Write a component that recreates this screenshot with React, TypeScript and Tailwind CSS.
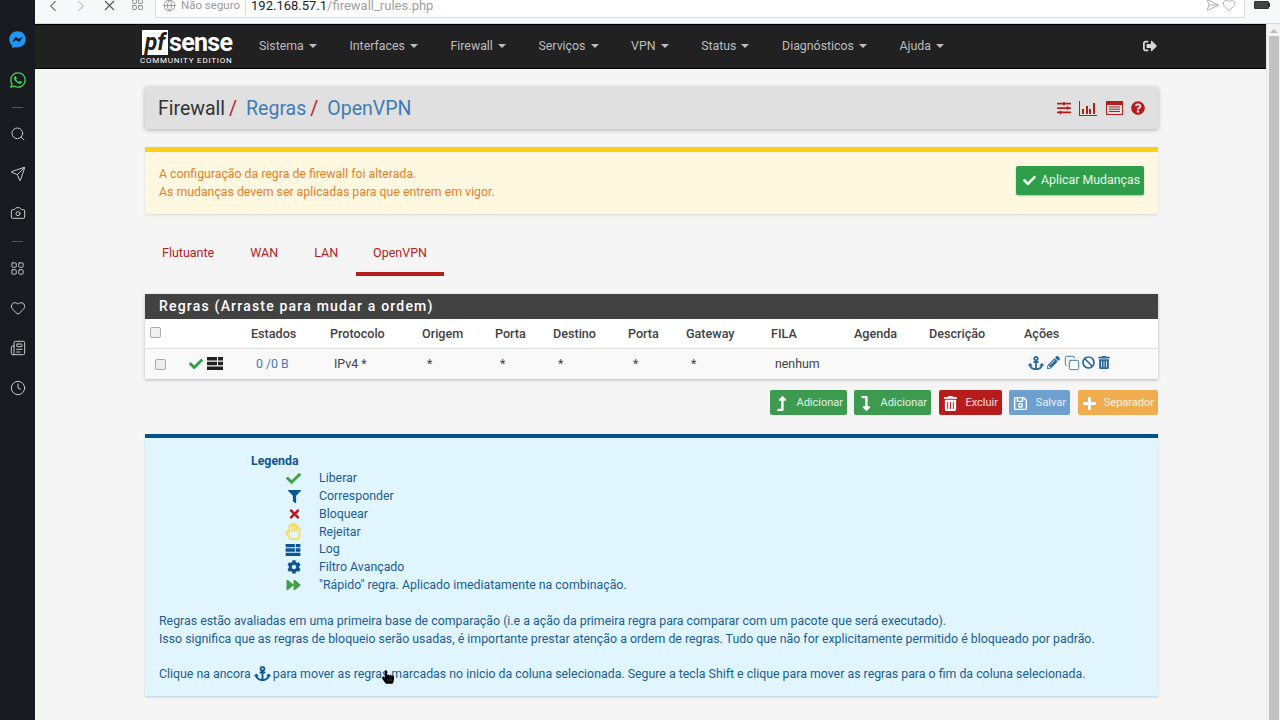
import { ChevronLeft, ChevronRight, X, LayoutGrid, Globe, Send, Heart, Search, Camera, Newspaper, Clock, Copy } from "lucide-react";
import {
  FaFacebookMessenger,
  FaWhatsapp,
  FaSignOutAlt,
  FaSlidersH,
  FaQuestionCircle,
  FaCheck,
  FaFilter,
  FaTimes,
  FaRegHandPaper,
  FaCog,
  FaForward,
  FaAnchor,
  FaPencilAlt,
  FaBan,
  FaTrashAlt,
  FaLevelUpAlt,
  FaLevelDownAlt,
  FaRegSave,
  FaPlus,
  FaHandPointer,
} from "react-icons/fa";

const menu = ["Sistema", "Interfaces", "Firewall", "Serviços", "VPN", "Status", "Diagnósticos", "Ajuda"];

function LogIcon({ className }: { className: string }) {
  return (
    <svg viewBox="0 0 16 13" className={className} fill="currentColor">
      <path d="M0 0h10v3.6H0zM11 0h5v3.6h-5zM0 4.7h10v3.6H0zM11 4.7h5v3.6h-5zM0 9.4h16V13H0z" />
    </svg>
  );
}

function BarsIcon() {
  return (
    <svg viewBox="0 0 18 15" className="h-[15px] w-[18px] text-[#b71c1c]" fill="currentColor">
      <path d="M0 0h1v14h17v1H0zM3 8h2v5H3zM7 5h2v8H7zM10 8h2v5h-2zM14 2h2v11h-2z" />
    </svg>
  );
}

function ListBoxIcon() {
  return (
    <svg viewBox="0 0 17 14" className="h-[14px] w-[17px] text-[#b71c1c]" fill="currentColor">
      <path d="M0 0h17v14H0zM1 4v9h15V4z" fillRule="evenodd" />
      <path d="M3 5.5h11v1H3zM3 7.8h11v1H3zM3 10.1h11v1H3z" />
    </svg>
  );
}

function Caret() {
  return <span className="ml-[5px] inline-block border-x-[4px] border-t-[4px] border-x-transparent border-t-[#bdbdbd] align-middle" />;
}

function Sidebar() {
  return (
    <aside className="flex w-[35px] shrink-0 flex-col items-center bg-[#171b1f] pt-[31px] text-[#c8c9ca]">
      <FaFacebookMessenger className="h-[17px] w-[17px] text-[#2196f3]" />
      <FaWhatsapp className="mt-[23px] h-[18px] w-[18px] text-[#43d854]" />
      <div className="mt-[18px] h-px w-[11px] bg-[#555]" />
      <Search className="mt-[18px] h-[16px] w-[16px]" strokeWidth={1.5} />
      <Send className="mt-[24px] h-[16px] w-[16px]" strokeWidth={1.5} />
      <Camera className="mt-[23px] h-[16px] w-[16px]" strokeWidth={1.5} />
      <div className="mt-[20px] h-px w-[11px] bg-[#555]" />
      <LayoutGrid className="mt-[19px] h-[15px] w-[15px]" strokeWidth={1.5} />
      <Heart className="mt-[24px] h-[16px] w-[16px]" strokeWidth={1.5} />
      <Newspaper className="mt-[24px] h-[16px] w-[16px]" strokeWidth={1.5} />
      <Clock className="mt-[24px] h-[16px] w-[16px]" strokeWidth={1.5} />
    </aside>
  );
}

function BrowserBar() {
  return (
    <div className="flex h-[24px] shrink-0 items-start border-b border-[#dcdcdc] bg-[#f7f8f9] text-[#777]">
      <ChevronLeft className="ml-[9px] mt-[-3px] h-[18px] w-[18px]" strokeWidth={1.5} />
      <ChevronRight className="ml-[10px] mt-[-3px] h-[18px] w-[18px] text-[#c4c4c4]" strokeWidth={1.5} />
      <X className="ml-[11px] mt-[-3px] h-[17px] w-[17px] text-[#555]" strokeWidth={1.5} />
      <LayoutGrid className="ml-[13px] mt-[-2px] h-[13px] w-[13px]" strokeWidth={1.5} />
      <div className="ml-[11px] flex h-[18px] w-[1090px] items-center border-r border-b border-l border-[#dcdcdc] bg-white pl-[7px]">
        <Globe className="mt-[-6px] h-[13px] w-[13px] text-[#888]" strokeWidth={1.5} />
        <span className="ml-[5px] mt-[-6px] text-[11.5px] text-[#9a9a9a]">Não seguro</span>
        <span className="ml-[5px] mt-[-6px] border-l border-[#ddd] pl-[5px] text-[13px] text-[#222]">
          192.168.57.1<span className="text-[#a0a0a0]">/firewall_rules.php</span>
        </span>
        <Send className="ml-auto mt-[-7px] h-[14px] w-[14px] rotate-45 text-[#aaa]" strokeWidth={1.5} />
        <Heart className="ml-[5px] mr-[8px] mt-[-7px] h-[14px] w-[14px] text-[#aaa]" strokeWidth={1.5} />
      </div>
      <div className="ml-[9px] mt-[1px] flex h-[8px] w-[15px] items-center rounded-[1px] border border-[#333] bg-[#444]" />
      <div className="mt-[3px] h-[4px] w-[1px] bg-[#333]" />
    </div>
  );
}

function Navbar() {
  return (
    <nav className="flex h-[45px] shrink-0 items-center border-y border-black bg-[#212121] pl-[107px] text-[#bdbdbd]">
      <div className="flex w-[117px] shrink-0 flex-col items-start self-start pt-[4px]">
        <div className="flex h-[26px] items-center">
          <span className="flex h-[25px] w-[26px] items-center justify-center bg-white text-[23px] font-bold italic leading-none text-[#212121]">pf</span>
          <span className="ml-[1px] text-[25px] font-bold leading-none tracking-[-0.7px] text-white">sense</span>
        </div>
        <span className="ml-[-2px] text-[8px] leading-[11px] tracking-[0.78px] text-white">COMMUNITY EDITION</span>
      </div>
      <div className="mb-[1px] flex gap-[32.6px]">
        {menu.map((item) => (
          <span key={item} className="text-[12.35px]">
            {item}
            <Caret />
          </span>
        ))}
      </div>
      <FaSignOutAlt className="mb-[2px] ml-auto mr-[109px] h-[14px] w-[14px] text-[#d8d8d8]" />
    </nav>
  );
}

function PageTitle() {
  return (
    <div className="flex h-[42px] items-center rounded-[2px] bg-[#e0e0e0] pl-[13px] pr-[13px] text-[19.5px] shadow-[0_1px_4px_rgba(0,0,0,0.3)]">
      <span className="pt-[1px] text-[#333]">Firewall</span>
      <span className="ml-[4px] pt-[1px] text-[#b71c1c]">/</span>
      <span className="ml-[9px] pt-[1px] text-[#3f7cb5]">Regras</span>
      <span className="ml-[4px] pt-[1px] text-[#b71c1c]">/</span>
      <span className="ml-[9px] pt-[1px] text-[#3f7cb5]">OpenVPN</span>
      <div className="ml-auto flex items-center text-[#b71c1c]">
        <FaSlidersH className="h-[14px] w-[14px]" />
        <span className="ml-[8px]"><BarsIcon /></span>
        <span className="ml-[9px]"><ListBoxIcon /></span>
        <FaQuestionCircle className="ml-[8px] h-[14px] w-[14px]" />
      </div>
    </div>
  );
}

function Alert() {
  return (
    <div className="mt-[18px] flex h-[67px] items-center justify-between border-t-[5px] border-[#fdd017] bg-[#fff8e1] pl-[14px] pr-[14px] shadow-[0_1px_2px_rgba(0,0,0,0.12)]">
      <div className="text-[12.3px] leading-[18px] text-[#ea7f1f]">
        <p>A configuração da regra de firewall foi alterada.</p>
        <p>As mudanças devem ser aplicadas para que entrem em vigor.</p>
      </div>
      <button type="button" className="mb-[6px] flex h-[29px] w-[128px] items-center justify-between rounded-[2px] bg-[#2e9e4a] pl-[7px] pr-[4px] text-[12.35px] text-white/90 shadow-[0_1px_2px_rgba(0,0,0,0.25)]">
        <FaCheck className="h-[13px] w-[13px]" />
        Aplicar Mudanças
      </button>
    </div>
  );
}

function Tabs() {
  return (
    <div className="mt-[20px] flex h-[42px] text-[12.5px] text-[#b71c1c]">
      <span className="flex items-center pb-[3px] pl-[17px] pr-[18px]">Flutuante</span>
      <span className="flex items-center px-[18px] pb-[3px]">WAN</span>
      <span className="flex items-center px-[18px] pb-[3px]">LAN</span>
      <span className="flex items-center border-b-[4px] border-[#b71c1c] px-[17px] pt-[1px]">OpenVPN</span>
    </div>
  );
}

const gridCols = "grid grid-cols-[106px_79px_92px_73px_58px_75px_58px_85px_83px_75px_95px_1fr]";

function RulesPanel() {
  return (
    <div className="mt-[18px] shadow-[0_1px_3px_rgba(0,0,0,0.25)]">
      <div className="flex h-[25px] items-center bg-[#424242] pl-[14px] text-[14px] font-medium tracking-[1.2px] text-white">
        Regras (Arraste para mudar a ordem)
      </div>
      <div className={`${gridCols} h-[30px] items-center border-b border-[#ddd] bg-white pt-[2px] text-[12.6px] font-medium text-[#424242]`}>
        <span className="pl-[5px]">
          <span className="mb-[4px] block h-[11px] w-[11px] rounded-[2px] border border-[#aaa] bg-[#f0f0f0]" />
        </span>
        <span>Estados</span>
        <span>Protocolo</span>
        <span>Origem</span>
        <span>Porta</span>
        <span>Destino</span>
        <span>Porta</span>
        <span>Gateway</span>
        <span>FILA</span>
        <span>Agenda</span>
        <span>Descrição</span>
        <span>Ações</span>
      </div>
      <div className={`${gridCols} h-[30px] items-center bg-[#f9f9f9] text-[12.35px] text-[#424242]`}>
        <span className="flex items-center pl-[10px]">
          <span className="block h-[11px] w-[11px] rounded-[2px] border border-[#aaa] bg-[#eee]" />
          <FaCheck className="ml-[23px] h-[14px] w-[14px] text-[#2e9e4a]" />
          <LogIcon className="ml-[4px] mb-[2px] h-[13px] w-[16px] text-[#212121]" />
        </span>
        <span className="pl-[5px] text-[#3f7cb5]">0 /0 B</span>
        <span className="pl-[4px]">IPv4 *</span>
        <span className="pl-[5px]">*</span>
        <span className="pl-[5px]">*</span>
        <span className="pl-[5px]">*</span>
        <span className="pl-[5px]">*</span>
        <span className="pl-[5px]">*</span>
        <span className="pl-[4px]">nenhum</span>
        <span />
        <span />
        <span className="flex items-center pl-[4px] pb-[3px] text-[#27689f]">
          <FaAnchor className="h-[16px] w-[16px]" />
          <FaPencilAlt className="ml-[3px] h-[13px] w-[13px]" />
          <Copy className="ml-[4px] h-[16px] w-[16px]" strokeWidth={1.25} />
          <FaBan className="ml-[2px] h-[13px] w-[13px]" />
          <FaTrashAlt className="ml-[3px] h-[13px] w-[12px]" />
        </span>
      </div>
    </div>
  );
}

const actions = [
  { label: "Adicionar", color: "bg-[#3c9b4e] w-[77px]", Icon: FaLevelUpAlt },
  { label: "Adicionar", color: "bg-[#3c9b4e] w-[77px] ml-[7px]", Icon: FaLevelDownAlt },
  { label: "Excluir", color: "bg-[#b71c1c] w-[63px] ml-[8px]", Icon: FaTrashAlt },
  { label: "Salvar", color: "bg-[#6d9fcf] w-[61px] ml-[7px]", Icon: FaRegSave },
  { label: "Separador", color: "bg-[#f0ad4e] w-[80px] ml-[8px]", Icon: FaPlus },
];

function ActionButtons() {
  return (
    <div className="mt-[11px] flex justify-end">
      {actions.map(({ label, color, Icon }, i) => (
        <button key={i} type="button" className={`flex h-[25px] items-center justify-between rounded-[2px] pl-[4px] pr-[4px] pt-[1px] text-[11px] text-white/85 ${color}`}>
          <Icon className="h-[15px] w-[15px] text-white" />
          {label}
        </button>
      ))}
    </div>
  );
}

const legend = [
  { text: "Liberar", icon: <FaCheck className="h-[15px] w-[15px] text-[#43a047]" /> },
  { text: "Corresponder", icon: <FaFilter className="h-[13px] w-[13px] text-[#0d5694]" /> },
  { text: "Bloquear", icon: <FaTimes className="h-[14px] w-[13px] text-[#b71c1c]" /> },
  { text: "Rejeitar", icon: <FaRegHandPaper className="h-[17px] w-[16px] text-[#fdd835]" /> },
  { text: "Log", icon: <LogIcon className="h-[12px] w-[16px] text-[#0d5694]" /> },
  { text: "Filtro Avançado", icon: <FaCog className="h-[14px] w-[14px] text-[#0d5694]" /> },
  { text: "\"Rápido\" regra. Aplicado imediatamente na combinação.", icon: <FaForward className="h-[14px] w-[15px] text-[#43a047]" /> },
];

function Legend() {
  return (
    <div className="relative mt-[19px] h-[262px] border-t-[4px] border-[#004f8f] bg-[#e1f5fe] pl-[14px] pt-[15px] text-[12.35px] text-[#1b5e92] shadow-[0_1px_2px_rgba(0,100,160,0.25)]">
      <div className="pl-[92px]">
        <p className="font-bold leading-[16.7px] text-[#0d5694]">Legenda</p>
        {legend.map((row) => (
          <div key={row.text} className="flex h-[17.75px] items-center">
            <span className="flex w-[68px] justify-end pr-[18px]">{row.icon}</span>
            <span>{row.text}</span>
          </div>
        ))}
      </div>
      <p className="mt-[17.8px] leading-[18px]">Regras estão avaliadas em uma primeira base de comparação (i.e a ação da primeira regra para comparar com um pacote que será executado).</p>
      <p className="leading-[18px]">Isso significa que as regras de bloqueio serão usadas, é importante prestar atenção a ordem de regras. Tudo que não for explicitamente permitido é bloqueado por padrão.</p>
      <p className="mt-[17px] flex items-center leading-[18px]">
        Clique na ancora
        <FaAnchor className="ml-[3px] mr-[2px] mb-[2px] h-[17px] w-[17px] text-[#0d5694]" />
        para mover as regras marcadas no inicio da coluna selecionada. Segure a tecla Shift e clique para mover as regras para o fim da coluna selecionada.
      </p>
      <FaHandPointer className="absolute left-[237px] top-[232px] h-[14px] w-[12px] text-black" />
    </div>
  );
}

export default function App() {
  return (
    <div className="flex h-[720px] w-[1280px] overflow-hidden bg-[#f5f5f5] font-['Roboto',sans-serif]">
      <Sidebar />
      <div className="flex min-w-0 flex-1 flex-col">
        <BrowserBar />
        <div className="flex min-h-0 flex-1">
          <div className="flex min-w-0 flex-1 flex-col">
            <Navbar />
            <main className="ml-[110px] w-[1013px] pt-[18px]">
              <PageTitle />
              <Alert />
              <Tabs />
              <RulesPanel />
              <ActionButtons />
              <Legend />
            </main>
          </div>
          <div className="flex w-[14px] shrink-0 flex-col items-center border-l border-[#e5e5e5] bg-[#f3f3f3]">
            <span className="mt-[5px] border-x-[4px] border-b-[4px] border-x-transparent border-b-[#bbb]" />
            <span className="mt-[3px] w-[10px] flex-1 bg-[#c2c2c2]" />
          </div>
        </div>
      </div>
    </div>
  );
}
